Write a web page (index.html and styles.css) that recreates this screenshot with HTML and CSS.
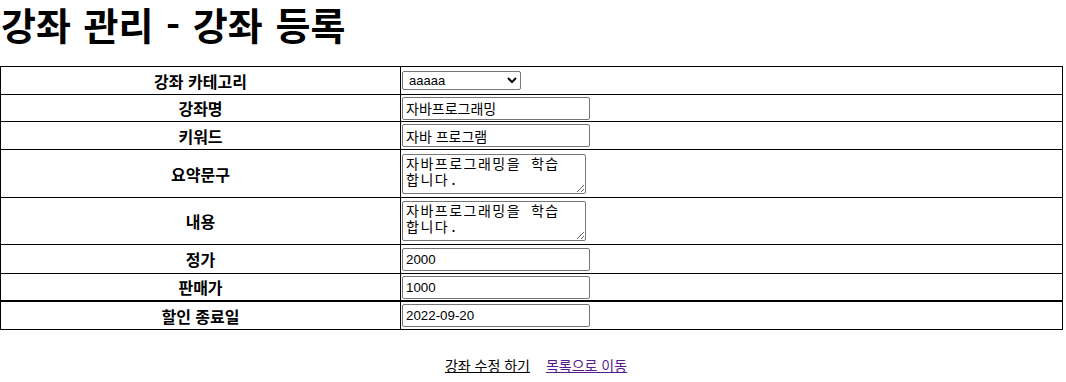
FILE: index.html
```html
<!DOCTYPE html>
<html lang="ko">
<head>
    <meta charset="UTF-8">
    <meta name="viewport" content="width=device-width, initial-scale=1.0">
    <title>강좌 관리 - 강좌 등록</title>
    <link rel="stylesheet" href="styles.css">
</head>
<body>
    <h1 class="title">강좌 관리 - 강좌 등록</h1>
    <table class="form">
        <tr class="row r1">
            <th>강좌 카테고리</th>
            <td>
                <select class="pick">
                    <option>aaaaa</option>
                </select>
            </td>
        </tr>
        <tr class="row r2">
            <th>강좌명</th>
            <td><input class="field" type="text" value="자바프로그래밍"></td>
        </tr>
        <tr class="row r3">
            <th>키워드</th>
            <td><input class="field" type="text" value="자바 프로그램"></td>
        </tr>
        <tr class="row r4">
            <th>요약문구</th>
            <td><textarea class="memo">자바프로그래밍을 학습 합니다.</textarea></td>
        </tr>
        <tr class="row r5">
            <th>내용</th>
            <td><textarea class="memo">자바프로그래밍을 학습 합니다.</textarea></td>
        </tr>
        <tr class="row r6">
            <th>정가</th>
            <td><input class="field num" type="text" value="2000"></td>
        </tr>
        <tr class="row r7">
            <th>판매가</th>
            <td><input class="field num" type="text" value="1000"></td>
        </tr>
        <tr class="row r8">
            <th>할인 종료일</th>
            <td><input class="field num" type="text" value="2022-09-20"></td>
        </tr>
    </table>
    <div class="links">
        <a class="edit" href="#">강좌 수정 하기</a>
        <a class="back" href="#">목록으로 이동</a>
    </div>
</body>
</html>
```

FILE: styles.css
```css
body {
    margin: 0;
    font-family: "Noto Sans CJK KR", "Liberation Sans", sans-serif;
    color: #000;
    background: #fff;
}
.title {
    margin: 0 0 18px;
    padding-left: 1px;
    font-size: 38px;
    line-height: 48px;
    word-spacing: 2px;
    font-weight: bold;
}
.form {
    width: 1063px;
    border-collapse: collapse;
    border: 1px solid #000;
}
.form th,
.form td {
    border: 1px solid #000;
    padding: 0 1px;
    vertical-align: middle;
}
.form th {
    width: 397px;
    font-size: 16px;
    font-weight: bold;
    text-align: center;
    line-height: 20px;
}
.form td {
    text-align: left;
}
/* row heights follow the original page */
.r1 th, .r1 td { height: 27px; }
.r2 th, .r2 td { height: 26px; }
.r3 th, .r3 td { height: 27px; }
.r4 th, .r4 td { height: 47px; }
.r5 th, .r5 td { height: 46px; }
.r6 th, .r6 td { height: 28px; }
.r7 th, .r7 td { height: 26px; }
.r8 th, .r8 td {
    border-top: 2px solid #000;
    height: 27px;
}
.pick {
    display: block;
    width: 119px;
    height: 19px;
    font-family: "Liberation Sans", Arial, sans-serif;
    font-size: 13px;
    padding: 0 2px;
    border: 1px solid #767676;
    border-radius: 2px;
    background: #fff;
}
.field {
    display: block;
    box-sizing: border-box;
    width: 188px;
    height: 23px;
    padding: 1px 3px;
    border: 1px solid #767676;
    border-radius: 2px;
    font-family: "Noto Sans CJK KR", sans-serif;
    font-size: 14px;
}
.field.num {
    font-family: "Liberation Sans", Arial, sans-serif;
    font-size: 13.33px;
}
.memo {
    display: block;
    box-sizing: border-box;
    width: 184px;
    height: 40px;
    padding: 1px 3px;
    border: 1px solid #767676;
    border-radius: 2px;
    font-family: "DejaVu Sans Mono", "Noto Sans CJK KR", monospace;
    font-size: 14px;
    line-height: 16px;
    letter-spacing: 1.5px;
    resize: both;
}
.links {
    margin-top: 25px;
    padding-left: 6px;
    text-align: center;
    font-size: 14px;
}
.links a {
    margin: 0 6px;
}
.edit {
    color: #000;
}
.back {
    color: #551a8b;
}
```
